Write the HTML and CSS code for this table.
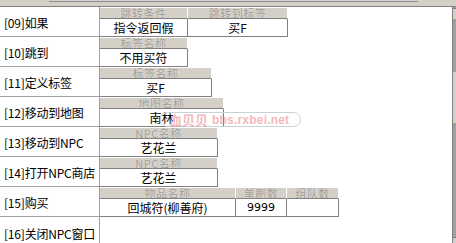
FILE: index.html
```html
<!DOCTYPE html>
<html>
<head>
<meta charset="utf-8">
<link rel="stylesheet" href="styles.css">
</head>
<body>
<div class="page">
  <div class="topband"><div class="tb-seg"></div></div>
  <div class="main">
    <div class="content">
      <div class="row">
        <div class="label">[09]如果</div>
        <div class="cell">
          <div class="col w88"><div class="hd">跳转条件</div><div class="val">指令返回假</div></div>
          <div class="col w100"><div class="hd">跳转到标签</div><div class="val">买F</div></div>
        </div>
      </div>
      <div class="row">
        <div class="label">[10]跳到</div>
        <div class="cell">
          <div class="col w88"><div class="hd">标签名称</div><div class="val">不用买符</div></div>
        </div>
      </div>
      <div class="row">
        <div class="label">[11]定义标签</div>
        <div class="cell">
          <div class="col w112"><div class="hd">标签名称</div><div class="val">买F</div></div>
        </div>
      </div>
      <div class="row">
        <div class="label">[12]移动到地图</div>
        <div class="cell">
          <div class="col w124"><div class="hd">地图名称</div><div class="val">南林</div></div>
        </div>
      </div>
      <div class="row">
        <div class="label">[13]移动到NPC</div>
        <div class="cell">
          <div class="col w118"><div class="hd">NPC名称</div><div class="val">艺花兰</div></div>
        </div>
      </div>
      <div class="row">
        <div class="label">[14]打开NPC商店</div>
        <div class="cell">
          <div class="col w118"><div class="hd">NPC名称</div><div class="val">艺花兰</div></div>
        </div>
      </div>
      <div class="row">
        <div class="label">[15]购买</div>
        <div class="cell">
          <div class="col w136"><div class="hd">物品名称</div><div class="val">回城符(柳善府)</div></div>
          <div class="col w51"><div class="hd">单刷数</div><div class="val num">9999</div></div>
          <div class="col w52"><div class="hd">组队数</div><div class="val"></div></div>
        </div>
      </div>
      <div class="row">
        <div class="label">[16]关闭NPC窗口</div>
        <div class="cell"></div>
      </div>
    </div>
    <div class="scroll">
      <div class="sb-btn sb-top"></div>
      <div class="sb-thumb"></div>
      <div class="sb-fill"></div>
      <div class="sb-btn sb-bottom"></div>
    </div>
  </div>
  <div class="watermark"><span class="wm-cn">血贝贝</span><span class="wm-en">bbs.rxbei.net</span></div>
</div>
</body>
</html>
```

FILE: styles.css
```css
html, body {
  margin: 0;
  padding: 0;
  background: #fff;
}
body {
  width: 456px;
  height: 243px;
  overflow: hidden;
  font-family: "Noto Sans CJK SC", "Liberation Sans", sans-serif;
  font-size: 12px;
  color: #000;
}
.page {
  position: relative;
  width: 456px;
  height: 243px;
  overflow: hidden;
}
.topband {
  height: 6px;
  background: #d4d0c8;
  border-bottom: 1px solid #808080;
  display: flex;
}
.tb-seg {
  margin-left: 49px;
  width: 369px;
  height: 1px;
  border-bottom: 1px solid #8c8c8c;
}
.main {
  display: flex;
  height: 236px;
}
.content {
  width: 452px;
  display: flex;
  flex-direction: column;
}
.row {
  display: flex;
  height: 30px;
  flex: none;
}
.label {
  width: 95px;
  padding-left: 4px;
  border-right: 1px solid #a0a0a0;
  border-bottom: 1px solid #a0a0a0;
  display: flex;
  align-items: center;
  padding-top: 2px;
  box-sizing: content-box;
  height: 27px;
  white-space: nowrap;
  letter-spacing: -0.2px;
}
.row:last-child .label {
  border-bottom: none;
  height: 28px;
}
.cell {
  display: flex;
  padding-top: 1px;
  align-items: flex-start;
}
.col {
  display: flex;
  flex-direction: column;
  flex: none;
}
.hd {
  height: 10px;
  line-height: 10px;
  font-size: 11px;
  background: #d4d0c8;
  border-right: 1px solid #fff;
  border-bottom: 1px solid #808080;
  color: #a09c98;
  text-align: center;
  overflow: hidden;
  white-space: nowrap;
  letter-spacing: 0.5px;
  text-shadow: 0 0 1px #eeeae4;
}
.val {
  height: 17px;
  line-height: 17px;
  border-right: 1px solid #808080;
  border-bottom: 1px solid #808080;
  text-align: center;
  white-space: nowrap;
  overflow: hidden;
}
.num {
  font-family: "DejaVu Sans", sans-serif;
  font-size: 11px;
}
.w88 { width: 88px; }
.w100 { width: 100px; }
.w112 { width: 112px; }
.w124 { width: 124px; }
.w118 { width: 118px; }
.w136 { width: 136px; }
.w51 { width: 51px; }
.w52 { width: 52px; }
.scroll {
  width: 4px;
  background: #a0a0a0;
  display: flex;
  flex-direction: column;
  border-left: 1px solid #808080;
  box-sizing: border-box;
}
.sb-btn {
  background: #d4d0c8;
  flex: none;
}
.sb-top {
  margin-top: 1px;
  height: 11px;
  border-top: 1px solid #808080;
  box-sizing: border-box;
}
.sb-thumb {
  margin-top: 53px;
  height: 51px;
  background: #d4d0c8;
  flex: none;
}
.sb-fill {
  flex: 1;
}
.sb-bottom {
  height: 6px;
  border-top: 1px solid #808080;
  box-sizing: border-box;
}
.watermark {
  position: absolute;
  left: 160px;
  top: 112px;
  width: 131px;
  height: 13px;
  border: 1px solid #c8d4d4;
  border-radius: 8px;
  display: flex;
  align-items: center;
  gap: 4px;
  padding-left: 8px;
  box-sizing: content-box;
  color: rgba(236, 110, 120, 0.5);
  white-space: nowrap;
}
.wm-cn {
  font-size: 13px;
  font-weight: bold;
}
.wm-en {
  font-family: "Liberation Sans", sans-serif;
  font-size: 12px;
  font-weight: bold;
  letter-spacing: 0.2px;
}
```
